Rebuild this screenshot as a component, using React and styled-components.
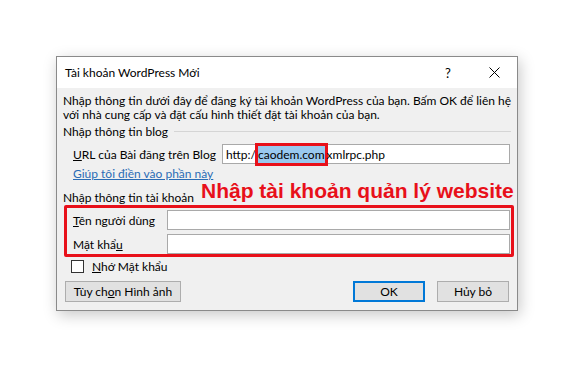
import React from 'react';
import styled, { createGlobalStyle } from 'styled-components';

const GlobalStyle = createGlobalStyle`
  html, body {
    margin: 0;
    padding: 0;
    background: #ffffff;
  }
  body {
    font-family: Lato, "Noto Sans", sans-serif;
    font-size: 12px;
    color: #000;
  }
`;

const Page = styled.div`
  width: 576px;
  height: 376px;
  padding: 56px 0 0 56px;
  box-sizing: border-box;
`;

const Dialog = styled.div`
  width: 462px;
  height: 255px;
  box-sizing: border-box;
  border: 1px solid #8a8a8a;
  background: #f0f0f0;
  box-shadow: 2px 4px 14px rgba(0, 0, 0, 0.22);
  display: flex;
  flex-direction: column;
`;

const TitleBar = styled.div`
  height: 31px;
  background: #ffffff;
  display: flex;
  align-items: center;
  padding-left: 8px;
  flex-shrink: 0;
`;

const Title = styled.div`
  flex: 1;
`;

const TitleButton = styled.div`
  width: 46px;
  height: 31px;
  display: flex;
  align-items: center;
  justify-content: center;
  font-size: 13px;
`;

const Body = styled.div`
  padding: 6px 5px 0 6px;
  display: flex;
  flex-direction: column;
`;

const Description = styled.div`
  line-height: 14px;
`;

const SectionHeader = styled.div`
  display: flex;
  align-items: center;
  gap: 6px;
  height: 16px;
  margin-top: ${p => p.$top || 0}px;
  padding-right: 1px;
  white-space: nowrap;
  &::after {
    content: '';
    flex: 1;
    height: 1px;
    background: #d5d5d5;
  }
`;

const Row = styled.div`
  display: flex;
  align-items: center;
  height: 20px;
  padding-left: ${p => p.$indent ?? 10}px;
  margin-top: ${p => p.$top || 0}px;
  padding-right: ${p => p.$right || 0}px;
`;

const Label = styled.div`
  width: ${p => p.$width}px;
  flex-shrink: 0;
  white-space: nowrap;
`;

const Input = styled.div`
  flex: 1;
  height: 20px;
  box-sizing: border-box;
  background: #fff;
  border: 1px solid #a9a9a9;
  display: flex;
  align-items: center;
  padding-left: 3px;
  white-space: nowrap;
`;

const Highlight = styled.span`
  background: #99c9ef;
  padding: 1px 0;
  box-shadow: 0 0 0 3px #e8101a;
  margin: 0 2px;
`;

const Link = styled.a`
  color: #2a6cb5;
  text-decoration: underline;
  padding-left: 10px;
  margin-top: 2px;
  height: 16px;
  line-height: 16px;
  display: block;
`;

const AccountHeader = styled.div`
  display: flex;
  align-items: center;
  margin-top: 7px;
  height: 16px;
  white-space: nowrap;
`;

const Annotation = styled.span`
  font-family: "Liberation Sans", Arial, sans-serif;
  font-weight: bold;
  font-size: 21px;
  color: #e8101a;
  margin-left: 7px;
  transform: translateY(-6px);
`;

const RedBox = styled.div`
  border: 3px solid #e8101a;
  border-radius: 2px;
  margin: 0 -2px 0 1px;
  padding: 2px 0 0 6px;
  display: flex;
  flex-direction: column;
  gap: 4px;
`;

const CheckRow = styled.div`
  display: flex;
  align-items: center;
  gap: 8px;
  padding-left: 8px;
  margin-top: 2px;
  height: 14px;
`;

const Box = styled.div`
  width: 13px;
  height: 13px;
  box-sizing: border-box;
  border: 1px solid #333;
  background: #fff;
`;

const Footer = styled.div`
  display: flex;
  align-items: center;
  gap: 12px;
  margin-top: 8px;
  padding: 0 3px 0 2px;
`;

const Button = styled.div`
  height: 21px;
  width: ${p => p.$width}px;
  box-sizing: border-box;
  border: ${p => (p.$primary ? '2px solid #0078d7' : '1px solid #adadad')};
  background: #e1e1e1;
  display: flex;
  align-items: center;
  justify-content: center;
  white-space: nowrap;
`;

const Spacer = styled.div`
  flex: 1;
`;

const U = styled.span`
  text-decoration: underline;
`;

function CloseIcon() {
  return (
    <svg width="11" height="11" viewBox="0 0 11 11">
      <path d="M0.5 0.5 L10.5 10.5 M10.5 0.5 L0.5 10.5" stroke="#000" strokeWidth="1" fill="none" />
    </svg>
  );
}

export default function App() {
  return (
    <Page>
      <GlobalStyle />
      <Dialog>
        <TitleBar>
          <Title>Tài khoản WordPress Mới</Title>
          <TitleButton>?</TitleButton>
          <TitleButton>
            <CloseIcon />
          </TitleButton>
        </TitleBar>
        <Body>
          <Description>
            Nhập thông tin dưới đây để đăng ký tài khoản WordPress của bạn. Bấm OK để liên hệ với nhà cung cấp và đặt
            cấu hình thiết đặt tài khoản của bạn.
          </Description>
          <SectionHeader $top={1}>Nhập thông tin blog</SectionHeader>
          <Row $top={5} $right={2}>
            <Label $width={149}>
              <U>U</U>RL của Bài đăng trên Blog
            </Label>
            <Input>
              http:/<Highlight>caodem.com</Highlight>xmlrpc.php
            </Input>
          </Row>
          <Link>Giúp tôi điền vào phần này</Link>
          <AccountHeader>
            Nhập thông tin tài khoản
            <Annotation>Nhập tài khoản quản lý website</Annotation>
          </AccountHeader>
          <RedBox>
            <Row $indent={0} $right={1}>
              <Label $width={94}>
                <U>T</U>ên người dùng
              </Label>
              <Input />
            </Row>
            <Row $indent={0} $right={1}>
              <Label $width={94}>
                Mật khẩ<U>u</U>
              </Label>
              <Input />
            </Row>
          </RedBox>
          <CheckRow>
            <Box />
            <span>
              <U>N</U>hớ Mật khẩu
            </span>
          </CheckRow>
          <Footer>
            <Button $width={116}>
              Tùy ch<U>o</U>n Hình ảnh
            </Button>
            <Spacer />
            <Button $width={72} $primary>
              OK
            </Button>
            <Button $width={72}>Hủy bỏ</Button>
          </Footer>
        </Body>
      </Dialog>
    </Page>
  );
}
